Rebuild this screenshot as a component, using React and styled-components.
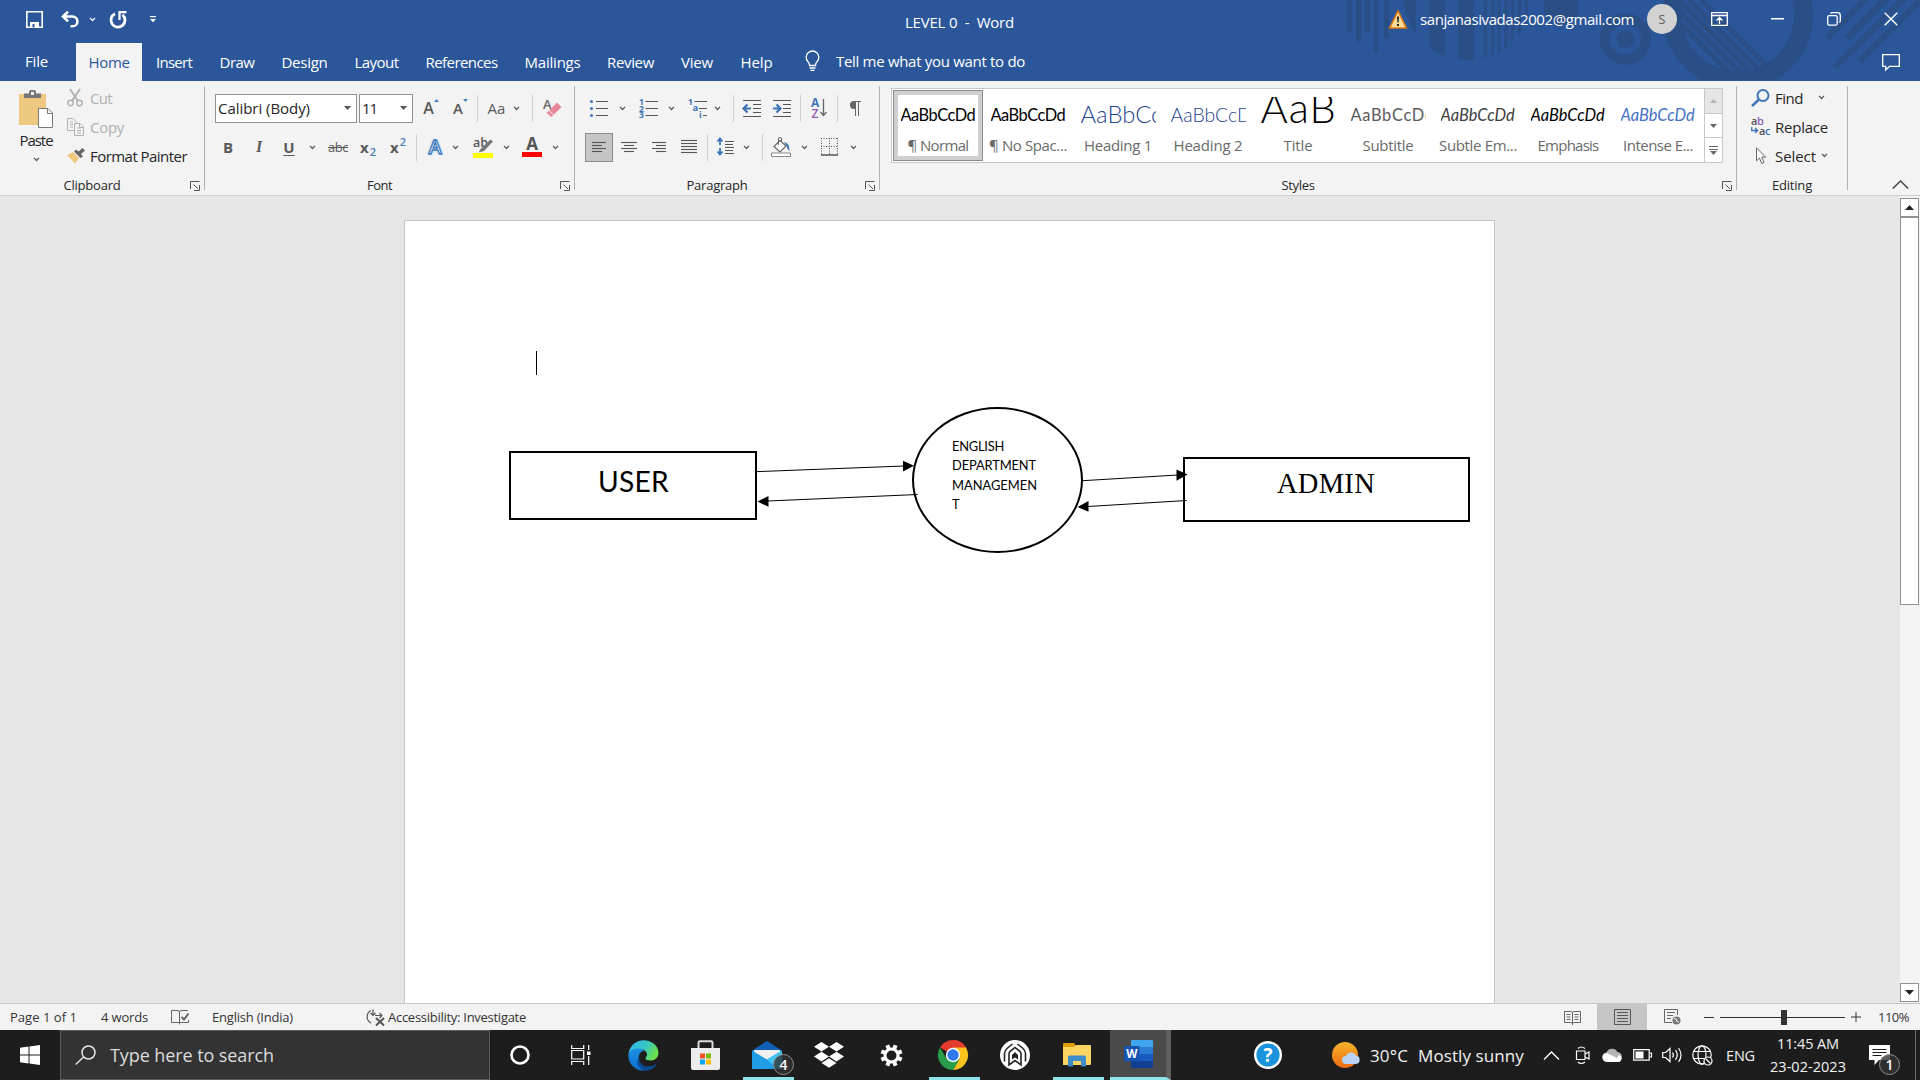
import React, { useLayoutEffect, useRef, useState } from "react";
import styled, { createGlobalStyle, css } from "styled-components";

const UI = `"Open Sans", "Noto Sans", sans-serif`;
const BODY = `Lato, "Open Sans", sans-serif`;

const GlobalStyle = createGlobalStyle`
  * { box-sizing: border-box; }
  body { margin: 0; background: #e6e6e6; overflow: hidden; font-family: ${UI}; }
  svg { display: block; flex: none; overflow: visible; }
`;

/* ---------- text that keeps a fixed advance width ---------- */

const FitBox = styled.span`
  display: block;
  flex: none;
  white-space: pre;
  width: ${(p) => p.$w}px;
`;

function Fit({ w, children }) {
  const ref = useRef(null);
  const [spacing, setSpacing] = useState(0);
  useLayoutEffect(() => {
    const natural = ref.current.getBoundingClientRect().width;
    setSpacing((w - natural) / Math.max(1, String(children).length));
  }, [w, children]);
  return (
    <FitBox $w={w}>
      <span ref={ref} style={{ letterSpacing: spacing }}>{children}</span>
    </FitBox>
  );
}

/* ---------- frame ---------- */

const Window = styled.div`
  width: 1920px;
  height: 1080px;
  display: flex;
  flex-direction: column;
  overflow: hidden;
`;

const Header = styled.header`
  position: relative;
  height: 81px;
  background: #2b579a;
  color: #fff;
  font-size: 15px;
`;

const Pattern = styled.svg`
  position: absolute;
  top: 0;
  right: 0;
  overflow: hidden;
`;

const TitleBar = styled.div`
  position: relative;
  display: flex;
  height: 43px;
`;

const QuickAccess = styled.div`
  display: flex;
  align-items: center;
  height: 40px;
  width: 905px;
  padding-left: 15px;
`;

const DocTitle = styled.div`
  display: flex;
  align-items: center;
  height: 44px;
`;

const Account = styled.div`
  display: flex;
  align-items: center;
  height: 38px;
  margin-left: auto;
`;

const Email = styled.div`
  margin: 0 13px;
`;

const Avatar = styled.div`
  display: flex;
  align-items: center;
  justify-content: center;
  width: 30px;
  height: 30px;
  margin-right: 14px;
  border-radius: 50%;
  background: #d2d2d2;
  color: #5c5c5c;
  font-size: 12.5px;
`;

const TabBar = styled.nav`
  position: relative;
  display: flex;
  height: 38px;
`;

const Tab = styled.div`
  display: flex;
  align-items: center;
  justify-content: center;
  width: ${(p) => p.$w}px;
  color: ${(p) => (p.$active ? "#2b579a" : "#fff")};
  background: ${(p) => (p.$active ? "#f3f3f3" : "transparent")};
  padding-bottom: ${(p) => (p.$file ? 2 : 0)}px;
  padding-right: ${(p) => (p.$file ? 3 : 0)}px;
`;

const TellMe = styled.div`
  display: flex;
  align-items: center;
  gap: 16px;
  margin-left: 19px;
  padding-bottom: 2px;
`;

const Comments = styled.div`
  display: flex;
  align-items: center;
  margin-left: auto;
  padding-right: 20px;
`;

/* ---------- ribbon ---------- */

const Ribbon = styled.div`
  display: flex;
  flex: none;
  height: 115px;
  padding-top: 5px;
  background: #f3f3f3;
  border-bottom: 1px solid #d0d0d0;
  color: #262626;
  font-size: 15px;
`;

const Group = styled.section`
  width: ${(p) => p.$w}px;
  height: 104px;
  border-right: 1px solid #b1b1b1;
`;

const GroupBody = styled.div`
  display: flex;
  flex-direction: ${(p) => (p.$column ? "column" : "row")};
  gap: ${(p) => (p.$column ? 10 : 0)}px;
  height: 90px;
  padding: ${(p) => p.$pad || "0"};
`;

const GroupFoot = styled.div`
  display: flex;
  align-items: center;
  height: 17px;
  font-size: 13px;
`;

const GroupName = styled.div`
  flex: 1;
  display: flex;
  justify-content: center;
`;

const Launcher = styled.div`
  width: 20px;
  padding: 2px 0 0 6px;
`;

const Row = styled.div`
  display: flex;
  align-items: center;
  flex: none;
  height: 29px;
`;

const Tool = styled.div`
  display: flex;
  align-items: center;
  justify-content: center;
  flex: none;
  width: ${(p) => p.$w}px;
  height: 29px;
  margin-left: ${(p) => p.$ml || 0}px;
  padding-bottom: 1px;
  ${(p) => p.$on && css`background: #c5c5c5; border: 1px solid #8c8c8c;`}
`;

const Sep = styled.div`
  flex: none;
  width: 1px;
  height: 27px;
  margin-left: ${(p) => p.$ml || 0}px;
  background: #d0d0d0;
`;

const Combo = styled.div`
  display: flex;
  align-items: center;
  justify-content: space-between;
  width: ${(p) => p.$w}px;
  height: 29px;
  margin-right: ${(p) => p.$mr || 0}px;
  padding: 0 5px 2px 2px;
  border: 1px solid #919191;
  background: #fff;
`;

const PasteButton = styled.div`
  display: flex;
  flex-direction: column;
  align-items: center;
  width: 67px;
  padding: 4px 0 0 5px;
  line-height: 24px;
`;

const CommandList = styled.div`
  margin-top: -3px;
`;

const Command = styled.div`
  display: flex;
  align-items: center;
  height: 29px;
  color: ${(p) => (p.$off ? "#b1b1b1" : "#262626")};
`;

const CommandIcon = styled.div`
  width: ${(p) => p.$w}px;
`;

const Glyph = styled.span`
  font: ${(p) => p.$font};
  color: ${(p) => p.$c || "#5a5a5a"};
  margin-top: -1px;
  text-decoration: ${(p) => p.$deco || "none"};
  text-underline-offset: 2px;
  white-space: nowrap;
`;

const GlowLetter = styled.span`
  font: 600 20px/24px ${UI};
  color: #fff;
  -webkit-text-stroke: 1.3px #3b78bd;
  text-shadow: 0 0 3px #8db9ea;
`;

const Mini = styled.span`
  font: 600 11px ${UI};
  line-height: 10px;
  color: #4a7ebb;
  align-self: ${(p) => (p.$up ? "flex-start" : "flex-end")};
  margin: ${(p) => (p.$up ? "4px 0 0 1px" : "0 0 4px 1px")};
`;

/* ---------- styles gallery ---------- */

const Gallery = styled.div`
  display: flex;
  width: 832px;
  height: 75px;
  border: 1px solid #c8c8c8;
  background: #fff;
  padding-left: 1px;
`;

const StyleItem = styled.div`
  display: flex;
  flex-direction: column;
  align-items: center;
  width: 90px;
  height: 71px;
  margin-top: 1px;
  padding-top: 7px;
  ${(p) => p.$on && css`border: 1px solid #8c8c8c; box-shadow: inset 0 0 0 4px #cfcfcf; padding-top: 6px;`}
  color: #6a6a6a;
`;

const Sample = styled.div`
  flex: none;
  width: 75px;
  height: 35px;
  overflow: hidden;
  white-space: nowrap;
  line-height: 35px;
  font-family: ${BODY};
  font-size: ${(p) => p.$size || 16.4}px;
  font-weight: ${(p) => p.$weight || 400};
  font-style: ${(p) => (p.$italic ? "italic" : "normal")};
  letter-spacing: ${(p) => p.$track || 0}px;
  color: ${(p) => p.$c || "#000"};
`;

const Raised = styled.div`
  margin-top: ${(p) => p.$by || 0}px;
`;

const StyleName = styled.div`
  line-height: 27px;
`;

const Spinner = styled.div`
  display: flex;
  flex-direction: column;
  width: 18px;
  margin-left: auto;
  border-left: 1px solid #c8c8c8;
`;

const SpinCell = styled.div`
  display: flex;
  align-items: center;
  justify-content: center;
  flex: 1;
  background: ${(p) => (p.$off ? "#e6e6e6" : "#fff")};
  & + & { border-top: 1px solid #c8c8c8; }
`;

const CollapseSlot = styled.div`
  display: flex;
  align-items: flex-end;
  margin-left: auto;
  padding: 0 11px 6px 0;
`;

/* ---------- document ---------- */

const Workspace = styled.main`
  display: flex;
  flex: 1;
  background: #e6e6e6;
  overflow: hidden;
`;

const Sheet = styled.div`
  position: relative;
  width: 1091px;
  margin: 24px 0 0 404px;
  border: 1px solid #c6c6c6;
  border-bottom: 0;
  background: #fff;
`;

const Caret = styled.div`
  position: absolute;
  left: 131px;
  top: 130px;
  width: 1px;
  height: 24px;
  background: #000;
`;

const Shape = styled.div`
  position: absolute;
  left: ${(p) => p.$x}px;
  top: ${(p) => p.$y}px;
  width: ${(p) => p.$w}px;
  height: ${(p) => p.$h}px;
  padding: ${(p) => p.$pad};
  border: 2px solid #000;
  border-radius: ${(p) => (p.$round ? "50%" : "0")};
  background: #fff;
  color: #000;
  font: ${(p) => p.$font};
`;

const Connectors = styled.svg`
  position: absolute;
  left: 0;
  top: 0;
`;

const ScrollBar = styled.div`
  display: flex;
  flex-direction: column;
  width: 20px;
  margin-left: auto;
  padding: 2px 1px 1px 0;
  background: #f3f3f3;
`;

const ScrollButton = styled.div`
  display: flex;
  align-items: center;
  justify-content: center;
  height: 19px;
  border: 1px solid #919191;
  background: #fff;
  margin-top: ${(p) => (p.$end ? "auto" : 0)};
`;

const Thumb = styled.div`
  height: 388px;
  border: 1px solid #919191;
  background: #fff;
`;

/* ---------- status bar ---------- */

const StatusBar = styled.footer`
  display: flex;
  align-items: center;
  flex: none;
  height: 27px;
  padding-left: 10px;
  border-top: 1px solid #c6c6c6;
  background: #f3f3f3;
  color: #333;
  font-size: 13px;
`;

const StatusItem = styled.div`
  margin-left: ${(p) => p.$ml || 0}px;
`;

const ViewControls = styled.div`
  display: flex;
  align-items: center;
  height: 26px;
  margin-left: auto;
  padding-right: 11px;
`;

const ViewButton = styled.div`
  display: flex;
  align-items: center;
  justify-content: center;
  width: 50px;
  height: 26px;
  background: ${(p) => (p.$on ? "#c6c6c6" : "transparent")};
`;

/* ---------- taskbar ---------- */

const Taskbar = styled.div`
  display: flex;
  flex: none;
  height: 50px;
  background: #1d1d1d;
  color: #f2f2f2;
`;

const Start = styled.div`
  display: flex;
  align-items: center;
  justify-content: center;
  width: 60px;
`;

const SearchBox = styled.div`
  display: flex;
  align-items: center;
  gap: 14px;
  width: 430px;
  padding-left: 14px;
  border: 1px solid #5c5c5c;
  background: #333;
  color: #dcdcdc;
  font-size: 18px;
`;

const TaskButton = styled.div`
  position: relative;
  display: flex;
  align-items: center;
  justify-content: center;
  width: ${(p) => p.$w || 62}px;
`;

const ActiveButton = styled.div`
  display: flex;
  align-items: center;
  justify-content: center;
  width: 61px;
  height: 50px;
  margin-left: 2px;
  border-right: 5px solid #5f5f5f;
  border-bottom: 3px solid #8fe3ea;
  background: #4a4a4a;
`;

const Underline = styled.div`
  position: absolute;
  bottom: 0;
  left: 7px;
  width: 51px;
  height: 3px;
  background: #8fe3ea;
`;

const Badge = styled.div`
  position: absolute;
  left: ${(p) => p.$x}px;
  top: 24px;
  width: 21px;
  height: 21px;
  border: 1px solid #8f8f8f;
  border-radius: 50%;
  background: #333c;
  color: #fff;
  font: 600 14px ${UI};
  line-height: 19px;
  text-align: center;
`;

const Tray = styled.div`
  display: flex;
  align-items: center;
  margin-left: auto;
  font-size: 17px;
`;

const TrayItem = styled.div`
  flex: none;
  margin-left: ${(p) => p.$ml || 0}px;
`;

const Language = styled.div`
  margin-left: 13px;
  font-size: 14.5px;
`;

const Clock = styled.div`
  display: flex;
  flex-direction: column;
  align-items: center;
  width: 76px;
  margin-left: 15px;
  font-size: 14.5px;
  line-height: 23px;
`;

const Notifications = styled.div`
  position: relative;
  align-self: stretch;
  width: 46px;
  margin-left: 23px;
  padding-top: 15px;
`;

const Peek = styled.div`
  align-self: stretch;
  width: 5px;
  border-left: 1px solid #6a6a6a;
`;

/* ---------- small drawings ---------- */

const Icon = ({ w, h, children, stroke = "none", sw = 1, fill = "none" }) => (
  <svg width={w} height={h} viewBox={`0 0 ${w} ${h}`} fill={fill} stroke={stroke} strokeWidth={sw}>
    {children}
  </svg>
);

const Chevron = ({ c = "#555" }) => (
  <Icon w={7} h={5} stroke={c} sw={1.2}><path d="M1 .8 3.5 3.5 6 .8" /></Icon>
);
const Arrow = ({ c = "#555", up }) => (
  <Icon w={7} h={4} fill={c}><path d={up ? "M0 4h7L3.500 0z" : "M0 0h7L3.500 4z"} /></Icon>
);

const LauncherIcon = () => (
  <Icon w={10} h={10} stroke="#555"><path d="M.5 8V.5H9.500M3.500 3.500 8 8M9.500 4v5.500H4" /></Icon>
);

const Lines = ({ w, h, rows }) => (
  <Icon w={w} h={h} stroke="#555" sw={1.1}>
    {rows.map(([x1, x2, y], i) => <path key={i} d={`M${x1} ${y}H${x2}`} />)}
  </Icon>
);

const HeaderPattern = () => (
  <Pattern width="600" height="81" viewBox="1320 0 600 81" fill="#2a4e86" stroke="none">
    <defs>
      <clipPath id="disc"><circle cx="1468" cy="-4" r="64" /></clipPath>
      <clipPath id="hole"><circle cx="1738" cy="15" r="57" /></clipPath>
      <clipPath id="ring"><rect x="1640" y="0" width="200" height="80" /></clipPath>
    </defs>
    <path d="M1347 0h5v32h-5zM1356 0h5v41.500h-5zM1365 0h5v32h-5zM1373.500 0h5v52h-5zM1384 0h5v37.500h-5z" />
    <g clipPath="url(#disc)">
      <path d="M1404 0h12v31h-12zM1429 0h16v70h-16zM1458 0h16v70h-16zM1484 0h3v70h-3zM1491 0h3v70h-3zM1497.500 0h3v70h-3zM1504.500 0h3v70h-3zM1511 0h3v70h-3zM1518 0h3v70h-3zM1525 0h3v70h-3z" />
    </g>
    <circle cx="1561" cy="8" r="17.500" />
    <circle cx="1625.500" cy="39" r="20.700" fill="none" stroke="#2a4e86" strokeWidth="10" />
    <circle cx="1625.500" cy="39" r="9" />
    <g clipPath="url(#ring)">
      <circle cx="1738" cy="15" r="65.500" fill="none" stroke="#2a4e86" strokeWidth="19" />
    </g>
    <g clipPath="url(#hole)" stroke="#2a4e86" strokeWidth="5.500">
      <path d="M1668 0l90 90M1678.500 0l90 90M1689 0l90 90M1701 0l90 90M1657 0l90 90" />
    </g>
    <g stroke="#2a4e86" strokeWidth="6.500">
      <path d="M1827 38l40-40M1847 38l40-40M1835 67l70-70M1860 61l64-64" />
    </g>
  </Pattern>
);

const Gear = () => (
  <Icon w={23} h={23} stroke="#fff" sw={3}>
    <circle cx="11.500" cy="11.500" r="6.500" />
    {[0, 45, 90, 135, 180, 225, 270, 315].map((a) => (
      <path key={a} d="M11.500 4.500V.5" strokeWidth="4" transform={`rotate(${a + 22.5} 11.500 11.500)`} />
    ))}
  </Icon>
);

/* ---------- content ---------- */

const TABS = [
  ["Home", 66, 41, true], ["Insert", 64, 36], ["Draw", 62, 35], ["Design", 73, 46], ["Layout", 71, 44],
  ["References", 99, 72], ["Mailings", 83, 56], ["Review", 73, 47], ["View", 60, 32], ["Help", 59, 32],
];

const STYLES = [
  { name: "¶ Normal", w: 61, on: true, track: -0.5 },
  { name: "¶ No Spac...", w: 78, track: -0.5 },
  { name: "Heading 1", w: 68, size: 23.8, weight: 300, c: "#1f4690" },
  { name: "Heading 2", w: 69, size: 19.4, weight: 300, c: "#1f4690" },
  { name: "Title", w: 29, size: 41.5, weight: 300, by: -7, track: 1 },
  { name: "Subtitle", w: 51, c: "#5a5a5a", track: 0.7 },
  { name: "Subtle Em...", w: 78, italic: true, c: "#404040" },
  { name: "Emphasis", w: 61, italic: true },
  { name: "Intense E...", w: 70, italic: true, c: "#4472c4" },
];

function ClipboardGroup() {
  return (
    <Group $w={205}>
      <GroupBody>
        <PasteButton>
          <Icon w={34} h={38}>
            <path d="M0 4h27v31H0z" fill="#edc87e" />
            <path d="M5 8V3.500h5V2q0-2 2-2h3q2 0 2 2v1.500h5V8z" fill="#777" />
            <path d="M12 2h3v3h-3z" fill="#f3f3f3" />
            <path d="M19.500 18.500H29l4.500 4.500v14.500h-14z" fill="#fff" stroke="#777" />
            <path d="M28.500 18.500V23.500h5" stroke="#777" />
          </Icon>
          <Fit w={33}>Paste</Fit>
          <Raised $by={5}><Chevron /></Raised>
        </PasteButton>
        <CommandList>
          <Command $off>
            <CommandIcon $w={23}>
              <Icon w={16} h={18} stroke="#b1b1b1" sw={1.4}>
                <path d="M3 0 11 12M13 0 5 12" strokeWidth="2" /><circle cx="3.500" cy="14" r="2.700" /><circle cx="12.500" cy="14" r="2.700" />
              </Icon>
            </CommandIcon>
            <Fit w={22}>Cut</Fit>
          </Command>
          <Command $off>
            <CommandIcon $w={23}>
              <Icon w={17} h={18} stroke="#b1b1b1">
                <path d="M7 12.500H.5V.5H6l3 3V5M3 4h3M3 6.500h3M3 9h3" />
                <path d="M7.500 5.500H13l3.500 3.500v8.500h-9zM10 10h4M10 12.500h4M10 15h4M12.500 5.500v4h4" />
              </Icon>
            </CommandIcon>
            <Fit w={34}>Copy</Fit>
          </Command>
          <Command>
            <CommandIcon $w={23}>
              <Icon w={18} h={16}>
                <path d="M0 7 6 4l6 6-4 5.500z" fill="#edc87e" />
                <path d="M7 3.500 9 1.500l2.500 2L15.500 0 18 2.500 14 6l2 2.500-2.500 1.500z" fill="#666" />
              </Icon>
            </CommandIcon>
            <Fit w={97}>Format Painter</Fit>
          </Command>
        </CommandList>
      </GroupBody>
      <GroupFoot><GroupName><Fit w={57}>Clipboard</Fit></GroupName><Launcher><LauncherIcon /></Launcher></GroupFoot>
    </Group>
  );
}

function FontGroup() {
  return (
    <Group $w={370}>
      <GroupBody $column $pad="8px 0 0 10px">
        <Row>
          <Combo $w={142} $mr={2}><Fit w={92}>Calibri (Body)</Fit><Arrow /></Combo>
          <Combo $w={54}><Fit w={15}>11</Fit><Arrow /></Combo>
          <Tool $w={36}>
            <Glyph $font={`600 16px/20px ${UI}`}>A</Glyph>
            <Raised $by={-16}><Icon w={5} h={3} fill="#4a7ebb"><path d="M0 3h5L2.500 0z" /></Icon></Raised>
          </Tool>
          <Tool $w={23}>
            <Glyph $font={`600 15px/20px ${UI}`}>A</Glyph>
            <Raised $by={-16}><Icon w={5} h={3} fill="#4a7ebb"><path d="M0 0h5L2.500 3z" /></Icon></Raised>
          </Tool>
          <Sep $ml={5} />
          <Tool $w={27} $ml={5}><Glyph $font={`400 15px ${UI}`}><Fit w={18}>Aa</Fit></Glyph></Tool>
          <Tool $w={12}><Chevron /></Tool>
          <Sep $ml={10} />
          <Tool $w={38}>
            <Icon w={19} h={20}>
              <text x="0" y="11" fontFamily="Open Sans" fontSize="13" fontWeight="600" fill="#666">A</text>
              <path d="M14 4.500 18.500 9 8.500 19 3.500 15z" fill="#e8879a" />
              <path d="M5.500 12 10.500 17" stroke="#f3f3f3" />
            </Icon>
          </Tool>
        </Row>
        <Row>
          <Tool $w={26}><Glyph $font={`700 15px ${UI}`}>B</Glyph></Tool>
          <Tool $w={36}><Glyph $font={`italic 700 16px "Liberation Serif", serif`}>I</Glyph></Tool>
          <Tool $w={24}><Glyph $font={`700 15px ${UI}`} $deco="underline">U</Glyph></Tool>
          <Tool $w={22}><Chevron /></Tool>
          <Tool $w={30}><Glyph $font={`400 13px ${UI}`} $deco="line-through"><Fit w={20}>abc</Fit></Glyph></Tool>
          <Tool $w={30}><Glyph $font={`700 15px ${UI}`}>x</Glyph><Mini>2</Mini></Tool>
          <Tool $w={30}><Glyph $font={`700 15px ${UI}`}>x</Glyph><Mini $up>2</Mini></Tool>
          <Sep $ml={3} />
          <Tool $w={28} $ml={4}><GlowLetter>A</GlowLetter></Tool>
          <Tool $w={12}><Chevron /></Tool>
          <Tool $w={30} $ml={7}>
            <Icon w={20} h={21}>
              <text x="0" y="10" fontFamily="Open Sans" fontSize="12.500" fontWeight="600" fill="#555">ab</text>
              <path d="M17.500 2.500 20 4.500 11 14 5.500 15.500 8 11.500z" fill="#777" />
              <path d="M0 16h20v5H0z" fill="#ff0" />
            </Icon>
          </Tool>
          <Tool $w={16}><Chevron /></Tool>
          <Tool $w={32} $ml={2}>
            <Icon w={20} h={20}>
              <text x="10" y="13" textAnchor="middle" fontFamily="Open Sans" fontSize="17" fontWeight="700" fill="#555">A</text>
              <path d="M0 15h20v5H0z" fill="#f00" />
            </Icon>
          </Tool>
          <Tool $w={14}><Chevron /></Tool>
        </Row>
      </GroupBody>
      <GroupFoot><GroupName><Fit w={25}>Font</Fit></GroupName><Launcher><LauncherIcon /></Launcher></GroupFoot>
    </Group>
  );
}

const IndentIcon = ({ flip }) => (
  <Icon w={18} h={17} stroke="#555">
    <path d="M0 .5h18M10 4.500h8M10 8.500h8M10 12.500h8M0 16.500h18" />
    <path d={flip ? "M0 8.500h7M3.500 4.500l4 4-4 4" : "M8 8.500H1M4.500 4.500l-4 4 4 4"} stroke="#3f74b5" strokeWidth="2.200" />
  </Icon>
);

function ParagraphGroup() {
  const num = { fontFamily: "Open Sans", fontSize: 8.5, fontWeight: 700, fill: "#3f74b5", stroke: "none" };
  return (
    <Group $w={305}>
      <GroupBody $column $pad="8px 0 0 10px">
        <Row>
          <Tool $w={28}>
            <Icon w={18} h={18} stroke="#555">
              <path d="M6 2.500h12M6 9.500h12M6 16.500h12" />
              <g fill="#3f74b5" stroke="none"><circle cx="1.500" cy="2.500" r="1.500" /><circle cx="1.500" cy="9.500" r="1.500" /><circle cx="1.500" cy="16.500" r="1.500" /></g>
            </Icon>
          </Tool>
          <Tool $w={18}><Chevron /></Tool>
          <Tool $w={34}>
            <Icon w={19} h={20} stroke="#555">
              <path d="M6.500 3.500H19M6.500 10.500H19M6.500 17.500H19" />
              <text x="0" y="6.500" {...num}>1</text><text x="0" y="13.500" {...num}>2</text><text x="0" y="20" {...num}>3</text>
            </Icon>
          </Tool>
          <Tool $w={12}><Chevron /></Tool>
          <Tool $w={28} $ml={6}>
            <Icon w={19} h={20} stroke="#555">
              <path d="M6.500 3.500H19M11 10.500H19M15 17.500H19" />
              <text x="0" y="6.500" {...num}>1</text><text x="4.500" y="13" {...num} fontSize="9.500">a</text><text x="11" y="20" {...num}>i</text>
            </Icon>
          </Tool>
          <Tool $w={12}><Chevron /></Tool>
          <Sep $ml={10} />
          <Tool $w={36}><IndentIcon /></Tool>
          <Tool $w={24}><IndentIcon flip /></Tool>
          <Sep $ml={6} />
          <Tool $w={36}>
            <Icon w={17} h={20}>
              <text x="0" y="9" fontFamily="Open Sans" fontSize="12" fontWeight="700" fill="#3f74b5">A</text>
              <text x="0.500" y="20" fontFamily="Open Sans" fontSize="12" fontWeight="600" fill="#8e5cb0">Z</text>
              <path d="M12.500 1v16M9.500 14l3 3.500 3-3.500" stroke="#666" strokeWidth="1.300" />
            </Icon>
          </Tool>
          <Sep />
          <Tool $w={35}>
            <Icon w={11} h={15} stroke="#666">
              <path d="M4.500 .5H11M5.500 1v14M8.500 1v14" /><path d="M5 0H4Q0 0 0 4t4 4h1z" fill="#666" stroke="none" />
            </Icon>
          </Tool>
        </Row>
        <Row>
          <Tool $w={28} $on><Lines w={14} h={12} rows={[[0, 14, 1.5], [0, 10, 4.5], [0, 14, 7.5], [0, 10, 10.5]]} /></Tool>
          <Tool $w={32}><Lines w={16} h={12} rows={[[0, 16, 1.5], [3, 13, 4.5], [0, 16, 7.5], [3, 13, 10.5]]} /></Tool>
          <Tool $w={28}><Lines w={14} h={12} rows={[[0, 14, 1.5], [4, 14, 4.5], [0, 14, 7.5], [4, 14, 10.5]]} /></Tool>
          <Tool $w={32}><Lines w={16} h={14} rows={[[0, 16, 0.5], [0, 16, 3.5], [0, 16, 6.5], [0, 16, 9.5], [0, 16, 12.5]]} /></Tool>
          <Sep $ml={2} />
          <Tool $w={29} $ml={3}>
            <Icon w={17} h={18} stroke="#555">
              <path d="M8 3.500h9M8 6.500h8M8 9.500h9M8 12.500h8M8 15.500h9" />
              <path d="M3 2v5M3 10v5M.5 3.500 3 .5l2.500 3M.5 13.500 3 16.500l2.500-3" stroke="#3f74b5" strokeWidth="1.800" />
            </Icon>
          </Tool>
          <Tool $w={12}><Chevron /></Tool>
          <Sep $ml={10} />
          <Tool $w={36}>
            <Icon w={20} h={20} stroke="#666">
              <path d="M9 3.500 15 9 9 15 3 9.500z" fill="#fff" strokeWidth="1.200" /><path d="M7.500 8V2q0-1.500 1.500-1.500T10.500 2v3" />
              <path d="M13 5q6 1 5.500 9-2-1-3-5z" fill="#3f74b5" stroke="none" />
              <path d="M.5 16h19v3.500H.5z" fill="#fff" stroke="#888" />
            </Icon>
          </Tool>
          <Tool $w={10}><Chevron /></Tool>
          <Tool $w={40}>
            <Icon w={17} h={18} stroke="#555">
              <path d="M.5 0v17M16.500 0v17M0 .5h17M8.500 0v17M0 8.500h17" strokeDasharray="1 1.500" /><path d="M0 17h17" strokeWidth="1.500" />
            </Icon>
          </Tool>
          <Tool $w={8}><Chevron /></Tool>
        </Row>
      </GroupBody>
      <GroupFoot><GroupName><Fit w={61}>Paragraph</Fit></GroupName><Launcher><LauncherIcon /></Launcher></GroupFoot>
    </Group>
  );
}

function StylesGroup() {
  return (
    <Group $w={857}>
      <GroupBody $pad="2px 0 0 11px">
        <Gallery>
          {STYLES.map((s) => (
            <StyleItem key={s.name} $on={s.on}>
              <Sample $size={s.size} $weight={s.weight} $italic={s.italic} $c={s.c} $track={s.track}>
                <Raised $by={s.by}>AaBbCcDd</Raised>
              </Sample>
              <StyleName><Fit w={s.w}>{s.name}</Fit></StyleName>
            </StyleItem>
          ))}
          <Spinner>
            <SpinCell $off><Arrow up c="#b5b5b5" /></SpinCell>
            <SpinCell><Arrow c="#666" /></SpinCell>
            <SpinCell><Icon w={9} h={9} fill="#666"><path d="M0 0h9v1H0zM0 3h9v1H0zM1 5h7L4.500 9z" /></Icon></SpinCell>
          </Spinner>
        </Gallery>
      </GroupBody>
      <GroupFoot><GroupName><Fit w={33}>Styles</Fit></GroupName><Launcher><LauncherIcon /></Launcher></GroupFoot>
    </Group>
  );
}

function EditingGroup() {
  return (
    <Group $w={111}>
      <GroupBody $pad="0 0 0 14px">
        <CommandList>
          <Command>
            <CommandIcon $w={24}>
              <Icon w={19} h={18} stroke="#3f74b5" sw={2}><circle cx="12" cy="6.500" r="5.500" /><path d="M8 10.500 1 17" strokeWidth="2.500" /></Icon>
            </CommandIcon>
            <Fit w={28}>Find</Fit>
            <Tool $w={14} $ml={11}><Chevron /></Tool>
          </Command>
          <Command>
            <CommandIcon $w={24}>
              <Icon w={20} h={20}>
                <text x="0" y="8" fontFamily="Open Sans" fontSize="11" fontWeight="600" fill="#555">a</text>
                <text x="6" y="8" fontFamily="Open Sans" fontSize="11" fontWeight="600" fill="#8e5cb0">b</text>
                <text x="8" y="18" fontFamily="Open Sans" fontSize="11" fontWeight="600" fill="#555">a</text>
                <text x="14" y="18" fontFamily="Open Sans" fontSize="11" fontWeight="600" fill="#3f74b5">c</text>
                <path d="M.7 10v3.500H6M4 11l2.700 2.500L4 16" stroke="#3f74b5" strokeWidth="1.300" />
              </Icon>
            </CommandIcon>
            <Fit w={53}>Replace</Fit>
          </Command>
          <Command>
            <CommandIcon $w={24}>
              <svg width="16" height="18" viewBox="-4 0 16 18" fill="#fff" stroke="#666"><path d="M1.500.8v13l3-2.800 2.200 5.500 2.300-1-2.300-5.300h4z" /></svg>
            </CommandIcon>
            <Fit w={41}>Select</Fit>
            <Tool $w={14} $ml={1}><Chevron /></Tool>
          </Command>
        </CommandList>
      </GroupBody>
      <GroupFoot><GroupName><Fit w={40}>Editing</Fit></GroupName></GroupFoot>
    </Group>
  );
}

function Diagram() {
  return (
    <Sheet>
      <Caret />
      <Shape $x={104} $y={230} $w={248} $h={69} $pad="8px 0 0 87px" $font={`400 28.2px/40px ${BODY}`}>
        <Fit w={71}>USER</Fit>
      </Shape>
      <Shape $round $x={507} $y={186} $w={171} $h={146} $pad="28px 0 0 38px" $font={`400 12.9px/19.3px ${BODY}`}>
        <Fit w={52}>ENGLISH</Fit>
        <Fit w={84}>DEPARTMENT</Fit>
        <Fit w={85}>MANAGEMEN</Fit>
        <Fit w={7}>T</Fit>
      </Shape>
      <Shape $x={778} $y={236} $w={287} $h={65} $pad="5px 0 0 92px" $font={`400 28.5px/40px "Liberation Serif", serif`}>
        <Fit w={98}>ADMIN</Fit>
      </Shape>
      <Connectors width="1089" height="400" viewBox="405 221 1089 400" stroke="#000" strokeWidth="1" fill="#000">
        <path d="M755 471.700 904 466M917.500 494.500 768 501M1082.500 480.700 1178 475M1186.500 500.500 1088 506.500" />
        <path stroke="none" d="M903 460.700V471.500L914 465.700zM768.500 496V506.800L757.500 501.500zM1176.500 469.500V480.700L1187.500 474.500zM1088.500 501V511.800L1077.500 507z" />
      </Connectors>
    </Sheet>
  );
}

function TaskbarApps() {
  return (
    <>
      <TaskButton $w={60}><Icon w={20} h={20} stroke="#fff" sw={2.6}><circle cx="10" cy="10" r="8.500" /></Icon></TaskButton>
      <TaskButton $w={62}>
        <Icon w={20} h={20} stroke="#fff" sw={1.2}>
          <path d="M.7 0v3.500h12V0M.7 5.500h12v8.500H.7zM.7 20v-3.500h12V20M17.700 0v5M17.700 11v9" /><path d="M16 6.500h3.500v3.500H16z" fill="#fff" stroke="none" />
        </Icon>
      </TaskButton>
      <TaskButton>
        <svg width="31" height="31" viewBox="0 0 31 31">
          <defs>
            <linearGradient id="e1" x1="0" y1="0" x2="1" y2=".4"><stop offset="0" stopColor="#2fb4e8" /><stop offset=".6" stopColor="#35c8c4" /><stop offset="1" stopColor="#6be04e" /></linearGradient>
            <linearGradient id="e2" x1="0" y1="0" x2="0" y2="1"><stop offset="0" stopColor="#1a8fe0" /><stop offset="1" stopColor="#0f6fd0" /></linearGradient>
          </defs>
          <path d="M.5 14C1.500 6 8 .3 15.500.3 24 .3 30.500 6 30.500 13c0 4.500-3.500 7.500-7.500 7.500-3.500 0-5.500-1-5.500-2.300 0-.8 1.500-1.500 1.500-3.700 0-3-3-5.500-7-5.500-6 0-10 3-11.500 5z" fill="url(#e1)" />
          <path d="M.4 15C1 11 5.500 8.500 10 8.500c3 0 5 .8 6.500 2-4 .5-6.500 4.500-5.500 9 1 5 5 8.500 9.500 9.500-2 1.300-5 1.800-7 1.500C6 29.700 0 23 .4 15z" fill="url(#e2)" />
          <path d="M11 17c-.5 5 3 9 7.500 9.500 4 .4 7.500-1 10.500-3-2 4.500-6.500 7.300-12 7C11 29.500 7 23 11 17z" fill="#0c4a94" />
        </svg>
      </TaskButton>
      <TaskButton>
        <Icon w={29} h={30}>
          <path d="M7.500 9V2.500Q7.500 1.200 9 1.200h11q1.500 0 1.500 1.300V9" stroke="#dcdcdc" strokeWidth="2" />
          <path d="M0 8h29v20q0 2-2 2H2q-2 0-2-2z" fill="#ececec" />
          <path d="M9 13.500h5v5H9z" fill="#f25022" /><path d="M15 13.500h5v5h-5z" fill="#7fba00" /><path d="M9 19.500h5v5H9z" fill="#00a4ef" /><path d="M15 19.500h5v5h-5z" fill="#ffb900" />
        </Icon>
      </TaskButton>
      <TaskButton>
        <Icon w={30} h={28}>
          <path d="M0 9.500 15 0l15 9.500V12H0z" fill="#0f5fb4" /><path d="M2 9h26v10H2z" fill="#f0f0f0" />
          <path d="M0 9.500 15 18.500 30 9.500V28H0z" fill="#1f9de6" /><path d="M30 9.500 15 18.500 26 28h4z" fill="#3ec5f2" />
        </Icon>
        <Underline /><Badge $x={37}>4</Badge>
      </TaskButton>
      <TaskButton>
        <Icon w={30} h={26} fill="#fff">
          <path d="M7.500 0 15 4.800 7.500 9.600 0 4.800zM22.500 0 30 4.800 22.500 9.600 15 4.800zM7.500 9.800 15 14.600 7.500 19.400 0 14.600zM22.500 9.800 30 14.600 22.500 19.400 15 14.600zM15 16.200 22.500 21 15 25.800 7.500 21z" />
        </Icon>
      </TaskButton>
      <TaskButton><Gear /></TaskButton>
      <TaskButton>
        <Icon w={30} h={30}>
          <path d="M15 15 2 7.500A15 15 0 0 1 28 7.500z" fill="#e33b2e" />
          <path d="M15 0a15 15 0 0 1 13 7.500H15z" fill="#e33b2e" />
          <path d="M28 7.500A15 15 0 0 1 15 30L21.500 18.700 15 7.500z" fill="#fcc31e" />
          <path d="M2 7.500A15 15 0 0 0 15 30l6.500-11.300H8.500z" fill="#2a9d4b" />
          <circle cx="15" cy="15" r="7.200" fill="#fff" /><circle cx="15" cy="15" r="5.700" fill="#3079ed" />
        </Icon>
        <Underline />
      </TaskButton>
      <TaskButton>
        <Icon w={30} h={30}>
          <circle cx="15" cy="15" r="15" fill="#fff" />
          <path d="M4.500 21.500V13.500Q4.500 10.500 7.500 8L12.500 4M25.500 21.500V13.500Q25.500 10.500 22.500 8L17.500 4" stroke="#222" strokeWidth="1.600" />
          <path d="M9 25V14q0-1.500 1.500-2.800L15 7.500l4.500 3.700Q21 12.500 21 14v11l-6-4.500z" fill="#fff" stroke="#222" strokeWidth="1.600" />
          <path d="M12 19.500V15L15 12l3 3v4.500L15 17.500z" fill="#222" />
        </Icon>
      </TaskButton>
      <TaskButton>
        <Icon w={28} h={24}>
          <path d="M0 1q0-1 1-1h10l2 3H28v8H0z" fill="#dfa00e" /><path d="M0 4h11l2-2h14q1 0 1 1v18q0 1-1 1H0z" fill="#fcd462" />
          <path d="M5 23.500V14q0-1.500 1.500-1.500h15Q23 12.500 23 14v9.500h-5V18h-8v5.500z" fill="#3f8ccb" />
        </Icon>
        <Underline />
      </TaskButton>
      <ActiveButton>
        <Icon w={29} h={28}>
          <path d="M7 1q0-1 1-1h20q1 0 1 1v6H7z" fill="#41a5ee" /><path d="M7 7h22v7H7z" fill="#2b7cd3" /><path d="M7 14h22v7H7z" fill="#185abd" /><path d="M7 21h22v6q0 1-1 1H8q-1 0-1-1z" fill="#103f91" />
          <rect x="0" y="6" width="15.500" height="15.500" rx="1" fill="#1553b0" />
          <text x="7.700" y="18" textAnchor="middle" fontFamily="Open Sans" fontWeight="700" fontSize="11.500" fill="#fff">W</text>
        </Icon>
      </ActiveButton>
    </>
  );
}

function SystemTray() {
  return (
    <Tray>
      <TrayItem>
        <Icon w={28} h={28}>
          <circle cx="14" cy="14" r="12.800" fill="#1a93dc" stroke="#fff" strokeWidth="2.400" />
          <text x="14" y="21" textAnchor="middle" fontFamily="Open Sans" fontWeight="700" fontSize="19" fill="#fff">?</text>
        </Icon>
      </TrayItem>
      <TrayItem $ml={50}>
        <svg width="28" height="27" viewBox="0 0 28 27">
          <defs><linearGradient id="sun" x1=".5" y1="0" x2=".5" y2="1"><stop offset="0" stopColor="#f6b32c" /><stop offset="1" stopColor="#ee6c12" /></linearGradient></defs>
          <circle cx="13" cy="13" r="13" fill="url(#sun)" />
          <path d="M14 22a4 4 0 0 1 0-8 5.500 5.500 0 0 1 10-.5 4.300 4.300 0 0 1 0 8.500z" fill="#b9d2f6" />
        </svg>
      </TrayItem>
      <TrayItem $ml={10}><Fit w={38}>30°C</Fit></TrayItem>
      <TrayItem $ml={10}><Fit w={106}>Mostly sunny</Fit></TrayItem>
      <TrayItem $ml={19}><Icon w={17} h={9} stroke="#fff" sw={1.3}><path d="M1 8.500 8.500 1 16 8.500" /></Icon></TrayItem>
      <TrayItem $ml={15}>
        <Icon w={15} h={19} stroke="#fff" sw={1.2}><path d="M1.500 5h8.500v8.500H1.500zM10 8l4-2v7l-4-2M3 2.500q3-3 7 0M3 16q3 3 7 0" /></Icon>
      </TrayItem>
      <TrayItem $ml={12}>
        <Icon w={21} h={14}><path d="M5 13.500a4.500 4.500 0 0 1-.5-9A6 6 0 0 1 15.500 4 5 5 0 0 1 17 13.500z" fill="#b5b5b5" /><path d="M5 14a4.500 4.500 0 0 1 0-9L15 10l2-3a3.700 3.700 0 0 1 0 7z" fill="#fff" /></Icon>
      </TrayItem>
      <TrayItem $ml={10}>
        <Icon w={19} h={12} stroke="#fff" sw={1.2}><path d="M.7.7h15.500v10.500H.7zM16.500 4h2v4h-2" /><path d="M2.500 2.500h8v7h-8z" fill="#fff" stroke="none" /></Icon>
      </TrayItem>
      <TrayItem $ml={10}>
        <Icon w={20} h={18} stroke="#fff" sw={1.2}><path d="M.7 6.500h3L8 2.500v13l-4.300-4h-3zM10.500 6.500q1.800 2.500 0 5M13.500 4.200q3.500 4.800 0 9.600M16.500 2q5 7 0 14" /></Icon>
      </TrayItem>
      <TrayItem $ml={10}>
        <Icon w={21} h={21} stroke="#fff" sw={1.2}>
          <circle cx="10" cy="10" r="9.200" /><ellipse cx="10" cy="10" rx="4" ry="9.200" /><path d="M1.500 6.500h17M1.500 13.500h11" />
          <circle cx="16" cy="16" r="4" fill="#1d1d1d" /><path d="M13.500 13.500l5 5" />
        </Icon>
      </TrayItem>
      <Language><Fit w={29}>ENG</Fit></Language>
      <Clock><Fit w={62}>11:45 AM</Fit><Fit w={76}>23-02-2023</Fit></Clock>
      <Notifications>
        <Icon w={21} h={21} fill="#fff"><path d="M0 0h21v15H10l-4.500 5v-5H0z" /><path d="M3.500 4.500h14M3.500 7.500h14M3.500 10.500h9" stroke="#1d1d1d" /></Icon>
        <Badge $x={10}>1</Badge>
      </Notifications>
      <Peek />
    </Tray>
  );
}

export default function App() {
  return (
    <Window>
      <GlobalStyle />
      <Header>
        <HeaderPattern />
        <TitleBar>
          <QuickAccess>
            <Tool $w={39}>
              <Icon w={17} h={17} stroke="#fff" sw={1.6}><path d="M.8.8h15.400v15.400H.8z" /><path d="M4 11h9v5.500H4z" fill="#fff" stroke="none" /><path d="M6.500 13h2v3.500h-2z" fill="#2b579a" stroke="none" /></Icon>
            </Tool>
            <Tool $w={31}>
              <Icon w={18} h={17} stroke="#fff" sw={2.6}><path d="M2 5.500h9.500a4.800 4.800 0 0 1 0 9.800H9.500M7 .8 2 5.500l5 4.700" /></Icon>
            </Tool>
            <Tool $w={14}><Chevron c="#fff" /></Tool>
            <Tool $w={38}>
              <Icon w={18} h={18} stroke="#fff" sw={2.8}><path d="M6 2.800A7 7 0 1 0 13.500 3.800" /><path d="M10.500 9V1.200H17.500" strokeWidth="2.200" /></Icon>
            </Tool>
            <Tool $w={32}><Icon w={7} h={7} fill="#fff"><path d="M0 0h6v1.200H0zM0 3h6L3 6.200z" /></Icon></Tool>
          </QuickAccess>
          <DocTitle><Fit w={109}>{"LEVEL 0  -  Word"}</Fit></DocTitle>
          <Account>
            <Icon w={18} h={19}>
              <path d="M9 1 17.300 18H.7z" fill="#fbdc9b" stroke="#e07a10" strokeWidth="1.600" /><path d="M8 6.500h2l-.4 6H8.400zM8 14h2v2H8z" fill="#222" />
            </Icon>
            <Email><Fit w={214}>sanjanasivadas2002@gmail.com</Fit></Email>
            <Avatar>S</Avatar>
            <Tool $w={57}>
              <Icon w={17} h={14} stroke="#fff" sw={1.3}><path d="M.7.7h15.600v12.600H.7zM.7 3.500h15.600M8.500 12V6M5.500 8.500l3-3 3 3" /></Icon>
            </Tool>
            <Tool $w={58}><Icon w={13} h={2} fill="#fff"><path d="M0 0h13v1.500H0z" /></Icon></Tool>
            <Tool $w={56}>
              <Icon w={14} h={14} stroke="#fff" sw={1.3}><rect x=".7" y="3.700" width="9.500" height="9.500" rx="1.500" /><path d="M3.500 1.500Q4 .7 5 .7h5.500q2.800 0 2.800 2.800V9q0 1-1 1.500" /></Icon>
            </Tool>
            <Tool $w={58}><Icon w={14} h={14} stroke="#fff" sw={1.4}><path d="M.7.7 13.300 13.300M13.300.7.7 13.300" /></Icon></Tool>
          </Account>
        </TitleBar>
        <TabBar>
          <Tab $w={76} $file><Fit w={23}>File</Fit></Tab>
          {TABS.map(([name, w, tw, active]) => (
            <Tab key={name} $w={w} $active={active}><Fit w={tw}>{name}</Fit></Tab>
          ))}
          <TellMe>
            <Icon w={15} h={20} stroke="#fff" sw={1.3}><path d="M4.500 14.500Q4.500 12 2.800 10.500A6.300 6.300 0 1 1 12.200 10.500Q10.500 12 10.500 14.500zM4.500 17h6M5.500 19.300h4" /></Icon>
            <Fit w={189}>Tell me what you want to do</Fit>
          </TellMe>
          <Comments>
            <Icon w={18} h={17} stroke="#fff" sw={1.3}><path d="M.7.7h16.600v11.600H7.500L3.700 16v-3.700h-3z" /></Icon>
          </Comments>
        </TabBar>
      </Header>

      <Ribbon>
        <ClipboardGroup />
        <FontGroup />
        <ParagraphGroup />
        <StylesGroup />
        <EditingGroup />
        <CollapseSlot><Icon w={17} h={9} stroke="#444" sw={1.5}><path d="M.8 8.500 8.500 1l7.700 7.500" /></Icon></CollapseSlot>
      </Ribbon>

      <Workspace>
        <Diagram />
        <ScrollBar>
          <ScrollButton><Icon w={9} h={5} fill="#222"><path d="M0 5h9L4.500 0z" /></Icon></ScrollButton>
          <Thumb />
          <ScrollButton $end><Icon w={9} h={5} fill="#222"><path d="M0 0h9L4.500 5z" /></Icon></ScrollButton>
        </ScrollBar>
      </Workspace>

      <StatusBar>
        <StatusItem><Fit w={67}>Page 1 of 1</Fit></StatusItem>
        <StatusItem $ml={24}><Fit w={47}>4 words</Fit></StatusItem>
        <StatusItem $ml={23}>
          <Icon w={18} h={16} stroke="#666"><path d="M8.500 13.500H.5V1.500H6q2.500 0 2.500 1.500v12.500M8.500 3q0-1.500 2.500-1.500h6M17.500 11v2.500H8.500" /><path d="M10.500 8l2.500 2.500 4.500-6" strokeWidth="2" /></Icon>
        </StatusItem>
        <StatusItem $ml={23}><Fit w={81}>English (India)</Fit></StatusItem>
        <StatusItem $ml={73}>
          <Icon w={19} h={17} stroke="#555" sw={1.2}><path d="M5 1.500A7 7 0 0 0 5 14M7 .5v6M4.500 4 7 6.500 9.500 4M9 6.500h6M13.500 4 16 6.500 13.500 9" /><path d="M10 9l8 7.500M18 9l-8 7.500" strokeWidth="2" /></Icon>
        </StatusItem>
        <StatusItem $ml={3}><Fit w={138}>Accessibility: Investigate</Fit></StatusItem>
        <ViewControls>
          <ViewButton>
            <Icon w={17} h={15} stroke="#666"><path d="M8.500 2v13M.5 1.500H7l1.500 1 1.500-1h6.500v11H10l-1.500 1-1.500-1H.5zM2.500 4.500h4M2.500 7h4M2.500 9.500h4M10.500 4.500h4M10.500 7h4M10.500 9.500h4" /></Icon>
          </ViewButton>
          <ViewButton $on>
            <Icon w={17} h={16} stroke="#555"><path d="M.5.5h16v15H.5zM3 3.500h11M3 6.500h11M3 9.500h11M3 12.500h11" /></Icon>
          </ViewButton>
          <ViewButton>
            <Icon w={17} h={16} stroke="#666"><path d="M8 13.500H.5V.5h13V6M3 3.500h8M3 6.500h6M3 9.500h4" /><circle cx="12.500" cy="11.500" r="4" fill="#777" stroke="none" /><path d="M10 9.500l3 1-1 2M13 12.500l2 .5" stroke="#f3f3f3" /></Icon>
          </ViewButton>
          <StatusItem $ml={7}><Icon w={10} h={1} fill="#333"><path d="M0 0h10v1H0z" /></Icon></StatusItem>
          <StatusItem $ml={6}><Icon w={125} h={15} fill="#333"><path d="M0 7h125v1H0zM61 0h6v15h-6z" /></Icon></StatusItem>
          <StatusItem $ml={6}><Icon w={10} h={10} fill="#333"><path d="M0 4.500h10v1H0zM4.500 0h1v10h-1z" /></Icon></StatusItem>
          <StatusItem $ml={17}><Fit w={31}>110%</Fit></StatusItem>
        </ViewControls>
      </StatusBar>

      <Taskbar>
        <Start><Icon w={20} h={20} fill="#fff"><path d="M0 2.800 8.500 1.600V9.500H0zM9.500 1.500 20 0V9.500H9.500zM0 10.500h8.500v7.900L0 17.200zM9.500 10.500H20V20L9.500 18.500z" /></Icon></Start>
        <SearchBox>
          <Icon w={21} h={20} stroke="#e6e6e6" sw={1.5}><circle cx="13.500" cy="7.500" r="6.500" /><path d="M8.500 12 .7 19.500" /></Icon>
          <Fit w={164}>Type here to search</Fit>
        </SearchBox>
        <TaskbarApps />
        <SystemTray />
      </Taskbar>
    </Window>
  );
}
